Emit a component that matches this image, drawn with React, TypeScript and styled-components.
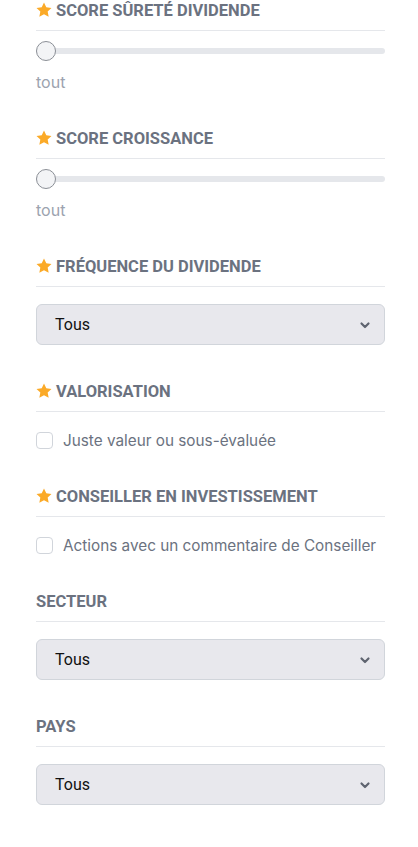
import { createGlobalStyle } from "styled-components"
import styled from "styled-components"

const GlobalStyle = createGlobalStyle`
  html, body {
    margin: 0;
    padding: 0;
    background: #fff;
  }
  body {
    font-family: Inter, "Noto Sans", sans-serif;
  }
`

const Panel = styled.div`
  width: 349px;
  padding: 0 33px 0 36px;
`

const Section = styled.section`
  margin-bottom: 36px;
`

const Heading = styled.h3`
  display: flex;
  align-items: center;
  gap: 4px;
  margin: 0;
  height: 20px;
  padding-bottom: 10px;
  border-bottom: 1px solid #e5e7eb;
  font-family: Roboto, "Liberation Sans", sans-serif;
  font-size: 16.5px;
  font-weight: 700;
  color: #6b7280;
  text-transform: uppercase;
`

const Star = () => (
  <svg width="16" height="16" viewBox="0 0 24 24">
    <path
      fill="#fbaa28"
      d="M12 .8l3.4 7.1 7.8 1-5.7 5.4 1.5 7.7L12 18.2l-7 3.8 1.5-7.7L.8 8.9l7.8-1z"
    />
  </svg>
)

const SliderWrap = styled.div`
  position: relative;
  height: 20px;
  margin-top: 10px;
  display: flex;
  align-items: center;
`

const Track = styled.div`
  flex: 1;
  height: 6px;
  border-radius: 3px;
  background: #e5e7eb;
`

const Thumb = styled.div`
  position: absolute;
  left: 0;
  top: 0;
  width: 18px;
  height: 18px;
  border-radius: 50%;
  background: #f3f4f6;
  border: 1px solid #8b8f96;
`

const SliderValue = styled.div`
  margin-top: 11px;
  font-size: 16px;
  line-height: 20px;
  color: #9ca3af;
`

const SelectBox = styled.div`
  margin-top: 17px;
  height: 39px;
  box-sizing: content-box;
  display: flex;
  align-items: center;
  justify-content: space-between;
  padding: 0 13px 0 18px;
  background: #e8e8ed;
  border: 1px solid #d1d5db;
  border-radius: 6px;
  font-family: Roboto, "Liberation Sans", sans-serif;
  font-size: 16px;
  color: #111;
`

const Chevron = () => (
  <svg width="12" height="12" viewBox="0 0 12 12">
    <path d="M2.5 4.5L6 8l3.5-3.5" fill="none" stroke="#5f6470" strokeWidth="2.2" strokeLinecap="round" strokeLinejoin="round" />
  </svg>
)

const CheckRow = styled.label`
  display: flex;
  align-items: center;
  gap: 10px;
  margin-top: 18px;
  height: 20px;
  font-size: 15.3px;
  color: #6b7280;
`

const Box = styled.span`
  width: 15px;
  height: 15px;
  border: 1px solid #d1d5db;
  border-radius: 4px;
  background: #fff;
`

const SliderSection = ({ title }: { title: string }) => (
  <Section>
    <Heading>
      <Star />
      {title}
    </Heading>
    <SliderWrap>
      <Track />
      <Thumb />
    </SliderWrap>
    <SliderValue>tout</SliderValue>
  </Section>
)

const SelectSection = ({ title, starred }: { title: string; starred?: boolean }) => (
  <Section>
    <Heading>
      {starred && <Star />}
      {title}
    </Heading>
    <SelectBox>
      <span>Tous</span>
      <Chevron />
    </SelectBox>
  </Section>
)

const CheckSection = ({ title, label }: { title: string; label: string }) => (
  <Section>
    <Heading>
      <Star />
      {title}
    </Heading>
    <CheckRow>
      <Box />
      {label}
    </CheckRow>
  </Section>
)

export default function App() {
  return (
    <>
      <GlobalStyle />
      <Panel>
        <SliderSection title="Score sûreté dividende" />
        <SliderSection title="Score croissance" />
        <SelectSection title="Fréquence du dividende" starred />
        <CheckSection title="Valorisation" label="Juste valeur ou sous-évaluée" />
        <CheckSection title="Conseiller en investissement" label="Actions avec un commentaire de Conseiller" />
        <SelectSection title="Secteur" />
        <SelectSection title="Pays" />
      </Panel>
    </>
  )
}
